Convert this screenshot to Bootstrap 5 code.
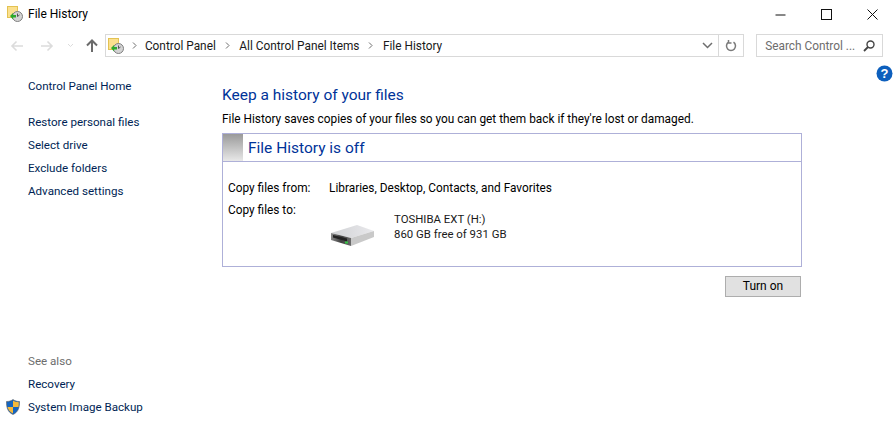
<!DOCTYPE html>
<html lang="en">
<head>
<meta charset="utf-8">
<title>File History</title>
<link href="https://cdn.jsdelivr.net/npm/bootstrap@5.3.0/dist/css/bootstrap.min.css" rel="stylesheet">
<style>
html,body{height:432px;overflow:hidden;background:#fff}
body{font-family:Roboto,"Open Sans","Liberation Sans",sans-serif;font-size:11.85px;line-height:16px;color:#000}
.win{height:432px;width:895px}
.titlebar{height:28px;padding-left:7px}
.titlebar .ttl{margin-left:5px;color:#000;font-size:12px}
.winbtns{width:138px}
.winbtns span{width:46px;display:flex;justify-content:center}
.toolbar{height:23px;margin-top:6px;padding-left:10px;padding-right:12px}
.navs{width:95px}
.fwd{margin-left:16px}
.chev{margin-left:13px}
.upa{margin-left:12px}
.addr{width:640px;height:23px;border:1px solid #d9d9d9;padding-left:2px}
.crumb{color:#1a1a1a}
.sep{margin:0 8px 0 8px;display:flex}
.sep2{margin:0 9.5px 0 9px}
.dd{margin-left:auto;width:22px;height:21px;border-right:1px solid #d9d9d9}
.rf{width:24px}
.srch{width:127px;height:23px;margin-left:12px;border:1px solid #d9d9d9;color:#6d6d6d;padding:0 7px 0 8px}
.mainarea{flex:1 1 auto;min-height:0}
.side{width:222px;padding:18px 0 13px 28px;font-size:11.6px}
.side a{color:#001f55;text-decoration:none;display:block;line-height:23px;height:23px}
.gap1{margin-top:13px}
.seeal{color:#6d6d6d;line-height:23px;height:23px}
.shield{left:-23px;top:3px}
.cont{width:580px;padding-top:28px}
.hd{color:#003399;font-size:15.5px;font-weight:400;line-height:20px;margin:0 0 6px}
.intro{line-height:16px;margin-bottom:6px}
.panel{height:134px;border:1px solid #aeb0d8}
.phead{height:28px;border-bottom:1px solid #aeb0d8}
.grad{width:20px;height:27px;background:linear-gradient(#9a9a9a,#e8e8e8)}
.ptitle{color:#003399;font-size:15.5px;margin-left:5px;line-height:29px}
.pbody{padding:18px 0 0 5px}
.lab{width:101px}
.copyto{margin-top:6px}
.drv{padding-left:102px;margin-top:-7px}
.dinfo{margin-left:20px;padding-top:1px;color:#1a1a1a;line-height:15px;font-size:11.4px}
.dicon{margin-top:13px}
.actions{margin-top:9px;padding-right:1px}
.turn{width:76px;height:21px;padding:0;border:1px solid #adadad;border-radius:0;background:#e1e1e1;color:#000;font-size:12px;line-height:19px}
.help{margin:8px 2px 0 auto;flex:none}
</style>
</head>
<body>
<svg width="0" height="0" class="d-block" aria-hidden="true"><defs>
<symbol id="fh" viewBox="0 0 16 16">
<rect x=".5" y=".5" width="10" height="11" fill="#fbe08e" stroke="#e3c252"/>
<circle cx="10.5" cy="10.5" r="5" fill="#d3d3d3" stroke="#7f7f7f"/>
<path d="M10.5 7.5v3l2-1.5" fill="none" stroke="#555" stroke-width="1"/>
<path d="M3 10l3-3v2h3v2.500H6v2z" fill="#2ca92c"/>
</symbol>
<linearGradient id="topf" x1="0" y1="0" x2="1" y2="0"><stop offset="0" stop-color="#d0d1d4"/><stop offset="1" stop-color="#e9e9ec"/></linearGradient>
<linearGradient id="frontf" x1="0" y1="0" x2="1" y2="0"><stop offset="0" stop-color="#8a8a8a"/><stop offset=".5" stop-color="#3f3f3f"/><stop offset="1" stop-color="#6a6a6a"/></linearGradient>
</defs></svg>
<div class="win d-flex flex-column">
  <div class="titlebar d-flex align-items-center">
    <svg width="16" height="16"><use href="#fh"/></svg>
    <span class="ttl">File History</span>
    <div class="winbtns ms-auto d-flex">
      <span><svg width="11" height="11"><path d="M.5 6h10" stroke="#111" fill="none"/></svg></span>
      <span><svg width="11" height="11"><rect x=".5" y=".5" width="10" height="10" fill="none" stroke="#111"/></svg></span>
      <span><svg width="11" height="11"><path d="M.5.500l10 10M10.500.500l-10 10" stroke="#111" fill="none"/></svg></span>
    </div>
  </div>
  <div class="toolbar d-flex align-items-center">
    <div class="navs d-flex align-items-center">
      <svg width="14" height="12" viewBox="0 0 14 12"><path d="M13 6H2M6.500 1.500L2 6l4.500 4.500" fill="none" stroke="#dcdcdc" stroke-width="1.600"/></svg>
      <svg class="fwd" width="14" height="12" viewBox="0 0 14 12"><path d="M1 6h11M7.500 1.500L12 6l-4.500 4.500" fill="none" stroke="#dcdcdc" stroke-width="1.600"/></svg>
      <svg class="chev" width="7" height="5" viewBox="0 0 7 5"><path d="M1 1l2.500 2.500L6 1" fill="none" stroke="#dcdcdc"/></svg>
      <svg class="upa" width="12" height="13" viewBox="0 0 12 13"><path d="M6 13V2M1 6.500L6 1.500l5 5" fill="none" stroke="#6b6b6b" stroke-width="2"/></svg>
    </div>
    <div class="addr d-flex align-items-center">
      <svg width="16" height="16"><use href="#fh"/></svg>
      <span class="sep"><svg width="5" height="7" viewBox="0 0 5 7"><path d="M1 .5l3 3-3 3" fill="none" stroke="#6e6e6e"/></svg></span>
      <span class="crumb">Control Panel</span>
      <span class="sep sep2"><svg width="5" height="7" viewBox="0 0 5 7"><path d="M1 .5l3 3-3 3" fill="none" stroke="#6e6e6e"/></svg></span>
      <span class="crumb">All Control Panel Items</span>
      <span class="sep sep2"><svg width="5" height="7" viewBox="0 0 5 7"><path d="M1 .5l3 3-3 3" fill="none" stroke="#6e6e6e"/></svg></span>
      <span class="crumb">File History</span>
      <span class="dd d-flex align-items-center justify-content-center"><svg width="11" height="7" viewBox="0 0 11 7"><path d="M1 1l4.500 4.500L10 1" fill="none" stroke="#6e6e6e" stroke-width="1.500"/></svg></span>
      <span class="rf d-flex justify-content-center"><svg width="12" height="13" viewBox="0 0 12 13"><path d="M8.500 3.200A4.500 4.500 0 1 1 3.500 3.200M3.500 1v3h3" fill="none" stroke="#7a7a7a" stroke-width="1.500"/></svg></span>
    </div>
    <div class="srch d-flex align-items-center justify-content-between">
      <span>Search Control ...</span>
      <svg width="12" height="12" viewBox="0 0 12 12"><circle cx="7.500" cy="4.500" r="3.500" fill="none" stroke="#444" stroke-width="1.400"/><path d="M5 7l-4 4" stroke="#444" stroke-width="1.800"/></svg>
    </div>
  </div>
  <div class="mainarea d-flex">
    <nav class="side d-flex flex-column">
      <a href="#">Control Panel Home</a>
      <a class="gap1" href="#">Restore personal files</a>
      <a href="#">Select drive</a>
      <a href="#">Exclude folders</a>
      <a href="#">Advanced settings</a>
      <div class="seeal mt-auto">See also</div>
      <a href="#">Recovery</a>
      <a class="position-relative" href="#"><svg class="position-absolute shield" width="16" height="16" viewBox="0 0 16 16"><path d="M8 .5c2 1.500 4 2 6.500 2 0 6-1 10.500-6.500 13C2.500 13 1.500 8.500 1.500 2.500 4 2.500 6 2 8 .5z" fill="#1565c0" stroke="#555" stroke-width=".6"/><path d="M8 1.500c1.500 1 3.500 1.500 5.800 1.700 0 2 0 3.200-.3 4.800H8zM8 8v6.500C5 13 3 10.500 2.500 8z" fill="#f5b93a"/></svg>System Image Backup</a>
    </nav>
    <main class="cont">
      <h1 class="hd">Keep a history of your files</h1>
      <p class="intro">File History saves copies of your files so you can get them back if they're lost or damaged.</p>
      <section class="panel">
        <div class="phead d-flex">
          <div class="grad"></div>
          <div class="ptitle">File History is off</div>
        </div>
        <div class="pbody">
          <div class="d-flex"><div class="lab">Copy files from:</div><div>Libraries, Desktop, Contacts, and Favorites</div></div>
          <div class="d-flex copyto"><div class="lab">Copy files to:</div></div>
          <div class="drv d-flex">
            <svg class="dicon" width="44" height="22" viewBox="0 0 44 22"><path d="M1 9L27 1l17 6-23 7z" fill="url(#topf)"/><path d="M1 9l20 5v8L1 16z" fill="url(#frontf)"/><path d="M21 14l23-7v6L21 22z" fill="#c9c9c9"/><path d="M3 11l14 3.500v3L3 13.500z" fill="#222"/><rect x="15" y="17.500" width="3" height="2" fill="#35c844"/></svg>
            <div class="dinfo">TOSHIBA EXT (H:)<br>860 GB free of 931 GB</div>
          </div>
        </div>
      </section>
      <div class="actions d-flex justify-content-end"><button type="button" class="btn turn">Turn on</button></div>
    </main>
    <svg class="help" width="17" height="17" viewBox="0 0 17 17"><circle cx="8.500" cy="8.500" r="8" fill="#0d5fbd"/><text x="8.500" y="13" text-anchor="middle" fill="#fff" font-size="13" font-weight="700" font-family="Liberation Sans, sans-serif">?</text></svg>
  </div>
</div>
</body>
</html>
